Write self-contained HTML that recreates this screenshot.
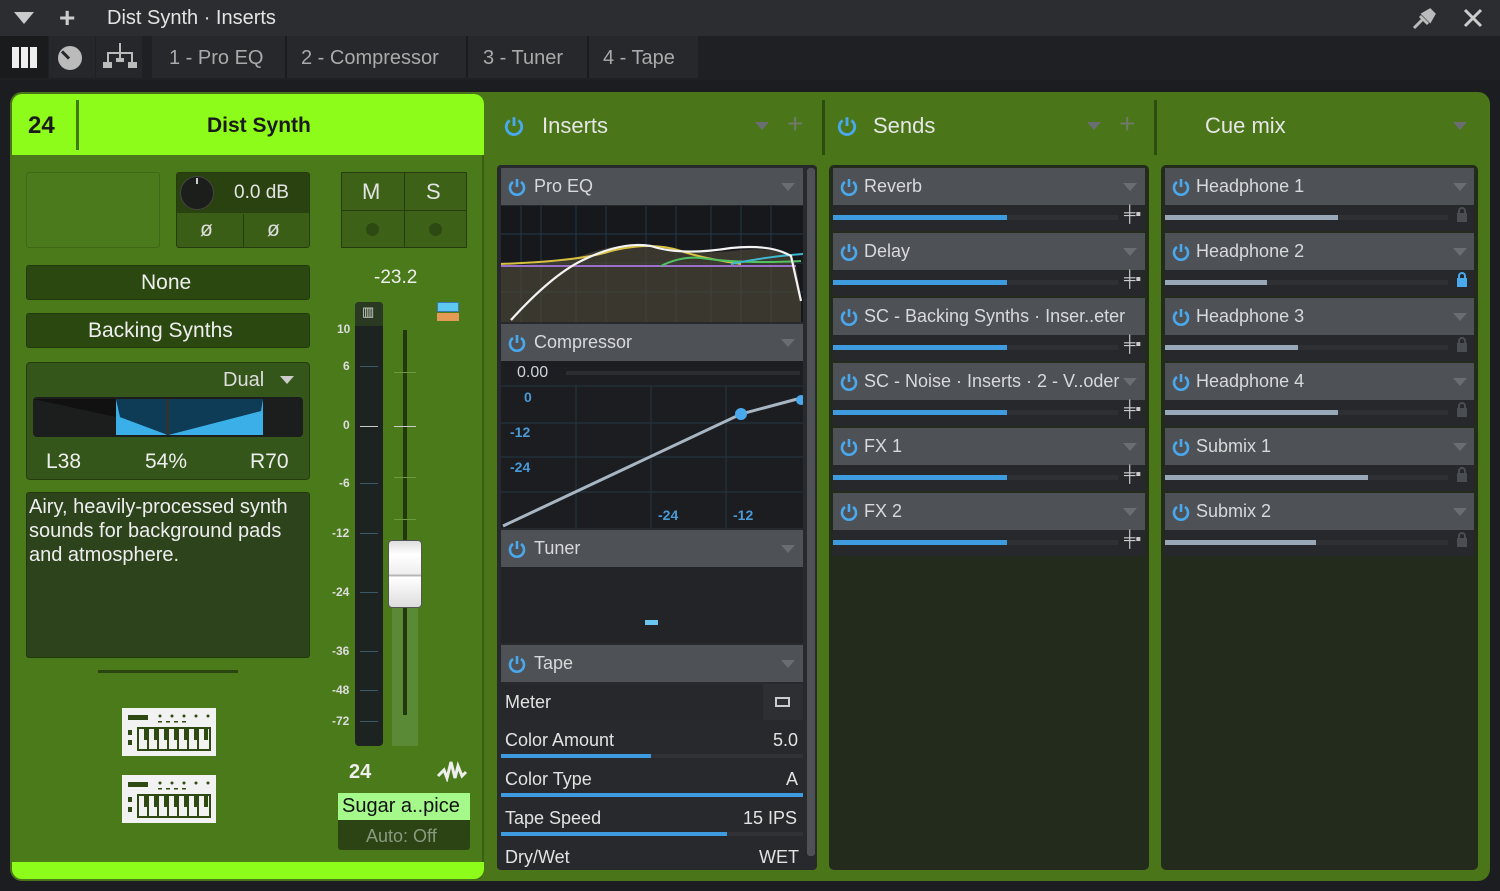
<!DOCTYPE html>
<html><head><meta charset="utf-8"><style>
*{margin:0;padding:0;box-sizing:border-box}
body{width:1500px;height:891px;background:#1c1d20;font-family:"Liberation Sans",sans-serif;position:relative;overflow:hidden;color:#ddd}
.a{position:absolute}
.t{position:absolute;white-space:nowrap}
.hdr{position:absolute;background:#4e5156;height:37px}
.hdr .t{top:8px;font-size:18px;color:#d8d9db}
.tri{position:absolute;width:0;height:0;border-left:7px solid transparent;border-right:7px solid transparent;border-top:8px solid #6a6d72}
.pw{position:absolute;width:20px;height:20px}
.row{position:absolute;background:#26282b}
.blue{background:#3e9be0}
</style></head><body>
<!-- top bar -->
<div class="a" style="left:0;top:0;width:1500px;height:36px;background:#2c2d30"></div>
<div class="a" style="left:14px;top:12px;width:0;height:0;border-left:10px solid transparent;border-right:10px solid transparent;border-top:12px solid #c9cacc"></div>
<div class="t" style="left:59px;top:2px;font-size:28px;color:#ccc;font-weight:bold">+</div>
<div class="t" style="left:107px;top:7px;font-size:20px;color:#e4e4e4">Dist Synth · Inserts</div>
<svg class="a" style="left:1410px;top:6px" width="28" height="26" viewBox="0 0 28 26"><path d="M4 22 L12 14 M10 10 L18 18 M13 8 L20 4 L24 8 L20 15 Z" stroke="#bbb" stroke-width="3" fill="#bbb"/></svg>
<svg class="a" style="left:1463px;top:8px" width="20" height="20"><path d="M2 2L18 18M18 2L2 18" stroke="#ccc" stroke-width="3"/></svg>
<!-- second bar -->
<div class="a" style="left:0;top:36px;width:1500px;height:44px;background:#1f2023"></div>
<div class="a" style="left:0;top:36px;width:48px;height:42px;background:#1a1b1d"></div>
<div class="a" style="left:12px;top:47px;width:26px;height:21px;background:repeating-linear-gradient(90deg,#eee 0 7px,transparent 7px 9px)"></div>
<div class="a" style="left:49px;top:36px;width:46px;height:42px;background:#26272a"></div>
<div class="a" style="left:58px;top:46px;width:24px;height:24px;border-radius:50%;background:#bbb"></div>
<div class="a" style="left:64px;top:50px;width:3px;height:10px;background:#26272a;transform:rotate(-45deg)"></div>
<div class="a" style="left:96px;top:36px;width:46px;height:42px;background:#26272a"></div>
<svg class="a" style="left:102px;top:41px" width="36" height="30"><path d="M18 2V12M6 22V12H30V22M18 12V18" stroke="#bbb" stroke-width="2" fill="none"/><rect x="1" y="21" width="9" height="6" fill="#bbb"/><rect x="26" y="21" width="9" height="6" fill="#bbb"/><rect x="14" y="17" width="8" height="4" fill="#bbb"/></svg>
<div class="a" style="left:152px;top:36px;width:546px;height:42px;background:#27282b"></div>
<div class="a" style="left:285px;top:36px;width:2px;height:42px;background:#1a1b1d"></div>
<div class="a" style="left:466px;top:36px;width:2px;height:42px;background:#1a1b1d"></div>
<div class="a" style="left:587px;top:36px;width:2px;height:42px;background:#1a1b1d"></div>
<div class="t" style="left:169px;top:47px;font-size:20px;color:#aaa">1 - Pro EQ</div>
<div class="t" style="left:301px;top:47px;font-size:20px;color:#aaa">2 - Compressor</div>
<div class="t" style="left:483px;top:47px;font-size:20px;color:#aaa">3 - Tuner</div>
<div class="t" style="left:603px;top:47px;font-size:20px;color:#aaa">4 - Tape</div>

<!-- green outer -->
<div class="a" style="left:10px;top:92px;width:1480px;height:789px;background:#4a7519;border-radius:12px"></div>
<!-- left channel -->
<div class="a" style="left:12px;top:94px;width:472px;height:786px;background:#4b7a1b;border-radius:10px;border-right:2px solid #3a5e14"></div>
<div class="a" style="left:12px;top:94px;width:472px;height:61px;background:#8efc1a;border-radius:10px 10px 0 0"></div>
<div class="a" style="left:76px;top:100px;width:3px;height:50px;background:#3f7a10"></div>
<div class="t" style="left:28px;top:112px;font-size:24px;font-weight:bold;color:#1a1a1a">24</div>
<div class="t" style="left:207px;top:114px;font-size:21px;font-weight:bold;color:#1a1a1a">Dist Synth</div>
<div class="a" style="left:12px;top:862px;width:472px;height:17px;background:#8efc1a;border-radius:0 0 10px 10px"></div>

<div class="a" style="left:26px;top:172px;width:134px;height:76px;border:1px solid #3f6716;border-radius:3px;background:#4a7a1b"></div>
<div class="a" style="left:176px;top:172px;width:134px;height:76px;border:1px solid #253d0e;border-radius:3px;background:#3a5e16"></div>
<div class="a" style="left:177px;top:173px;width:132px;height:40px;background:#2a4210"></div>
<div class="a" style="left:180px;top:176px;width:34px;height:34px;border-radius:50%;background:#1c1e1c;border:1px solid #444"></div>
<div class="a" style="left:196px;top:178px;width:2px;height:6px;background:#ccc"></div>
<div class="t" style="left:234px;top:182px;font-size:19px;color:#e4e4e4">0.0 dB</div>
<div class="a" style="left:243px;top:214px;width:1px;height:33px;background:#253d0e"></div>
<div class="t" style="left:200px;top:218px;font-size:21px;color:#ddd">ø</div>
<div class="t" style="left:267px;top:218px;font-size:21px;color:#ddd">ø</div>

<div class="a" style="left:341px;top:172px;width:126px;height:76px;border:1px solid #253d0e;background:#3c6117"></div>
<div class="a" style="left:404px;top:173px;width:1px;height:74px;background:#253d0e"></div>
<div class="a" style="left:342px;top:210px;width:124px;height:1px;background:#253d0e"></div>
<div class="t" style="left:362px;top:179px;font-size:22px;color:#e4e4e4">M</div>
<div class="t" style="left:426px;top:179px;font-size:22px;color:#e4e4e4">S</div>
<div class="a" style="left:366px;top:223px;width:13px;height:13px;border-radius:50%;background:#2d4a12"></div>
<div class="a" style="left:429px;top:223px;width:13px;height:13px;border-radius:50%;background:#2d4a12"></div>

<div class="a" style="left:26px;top:265px;width:284px;height:35px;background:#2c4811;border:1px solid #203a0c;border-radius:3px"></div>
<div class="t" style="left:141px;top:271px;font-size:21px;color:#eee">None</div>
<div class="a" style="left:26px;top:313px;width:284px;height:35px;background:#2c4811;border:1px solid #203a0c;border-radius:3px"></div>
<div class="t" style="left:88px;top:319px;font-size:21px;color:#eee">Backing Synths</div>
<div class="t" style="left:374px;top:267px;font-size:19px;color:#eee">-23.2</div>

<div class="a" style="left:26px;top:362px;width:284px;height:118px;background:#35561a;border:1px solid #253d0e;border-radius:4px"></div>
<div class="t" style="left:223px;top:369px;font-size:20px;color:#ddd">Dual</div>
<div class="tri" style="left:280px;top:376px;border-top-color:#ccc"></div>
<svg class="a" style="left:33px;top:397px" width="270" height="40"><rect x="0" y="0" width="270" height="40" rx="4" fill="#1c1e1e"/><rect x="83" y="2" width="147" height="36" fill="#0d3a52"/><path d="M83 2V38H230V2L228 14L135 38L87 20Z" fill="#3bb0e8"/><path d="M87 20L135 38L228 14V2H87Z" fill="#0e3b55"/><rect x="133" y="2" width="3" height="36" fill="#333"/><path d="M0 2L83 20V2Z" fill="#111"/></svg>
<div class="t" style="left:46px;top:450px;font-size:21px;color:#eee">L38</div>
<div class="t" style="left:145px;top:450px;font-size:21px;color:#eee">54%</div>
<div class="t" style="left:250px;top:450px;font-size:21px;color:#eee">R70</div>

<div class="a" style="left:26px;top:492px;width:284px;height:166px;background:#2c431c;border:1px solid #203a0c;border-radius:3px"></div>
<div class="a" style="left:29px;top:495px;font-size:20px;line-height:24px;color:#eee;width:282px">Airy, heavily-processed synth sounds for background pads and atmosphere.</div>
<div class="a" style="left:98px;top:670px;width:140px;height:3px;background:#2a4510"></div>

<svg class="a" style="left:122px;top:708px" width="94" height="48"><rect width="94" height="48" fill="#f2f2f2"/><rect x="6" y="7" width="20" height="5" fill="#2e4a12"/><g fill="#2e4a12"><circle cx="38" cy="8" r="1.5"/><circle cx="50" cy="8" r="1.5"/><circle cx="62" cy="8" r="1.5"/><circle cx="74" cy="8" r="1.5"/><circle cx="86" cy="8" r="1.5"/><rect x="36" y="13" width="4" height="1.5"/><rect x="44" y="13" width="4" height="1.5"/><rect x="52" y="13" width="4" height="1.5"/><rect x="60" y="13" width="4" height="1.5"/><rect x="6" y="22" width="4" height="5"/><rect x="6" y="32" width="4" height="5"/></g><rect x="16" y="20" width="72" height="22" fill="none" stroke="#2e4a12" stroke-width="2"/><path d="M26 20V42M36 20V42M46 20V42M56 20V42M66 20V42M76 20V42" stroke="#2e4a12" stroke-width="2"/><g fill="#2e4a12"><rect x="22" y="20" width="4" height="12"/><rect x="32" y="20" width="4" height="12"/><rect x="42" y="20" width="4" height="12"/><rect x="52" y="20" width="4" height="12"/><rect x="62" y="20" width="4" height="12"/><rect x="72" y="20" width="4" height="12"/><rect x="82" y="20" width="4" height="12"/></g></svg>
<svg class="a" style="left:122px;top:775px" width="94" height="48"><rect width="94" height="48" fill="#f2f2f2"/><rect x="6" y="7" width="20" height="5" fill="#2e4a12"/><g fill="#2e4a12"><circle cx="38" cy="8" r="1.5"/><circle cx="50" cy="8" r="1.5"/><circle cx="62" cy="8" r="1.5"/><circle cx="74" cy="8" r="1.5"/><circle cx="86" cy="8" r="1.5"/><rect x="36" y="13" width="4" height="1.5"/><rect x="44" y="13" width="4" height="1.5"/><rect x="52" y="13" width="4" height="1.5"/><rect x="60" y="13" width="4" height="1.5"/><rect x="6" y="22" width="4" height="5"/><rect x="6" y="32" width="4" height="5"/></g><rect x="16" y="20" width="72" height="22" fill="none" stroke="#2e4a12" stroke-width="2"/><path d="M26 20V42M36 20V42M46 20V42M56 20V42M66 20V42M76 20V42" stroke="#2e4a12" stroke-width="2"/><g fill="#2e4a12"><rect x="22" y="20" width="4" height="12"/><rect x="32" y="20" width="4" height="12"/><rect x="42" y="20" width="4" height="12"/><rect x="52" y="20" width="4" height="12"/><rect x="62" y="20" width="4" height="12"/><rect x="72" y="20" width="4" height="12"/><rect x="82" y="20" width="4" height="12"/></g></svg>

<!-- fader -->
<div class="a" style="left:355px;top:302px;width:28px;height:444px;background:#1d2320;border-radius:4px"></div>
<div class="a" style="left:355px;top:302px;width:28px;height:24px;background:#2a3a22;border-radius:4px 4px 0 0"></div>
<div class="t" style="left:362px;top:304px;font-size:13px;color:#ddd">▥</div>
<div class="a" style="left:392px;top:540px;width:26px;height:206px;background:#5a8a36"></div>
<div class="a" style="left:403px;top:330px;width:4px;height:385px;background:#22380c"></div>
<div class="a" style="left:437px;top:302px;width:22px;height:10px;background:#5ec8f0;border:1px solid #3a7ab0"></div>
<div class="a" style="left:437px;top:313px;width:22px;height:8px;background:#e49a55"></div>
<div class="t" style="left:337px;top:322px;font-size:12px;font-weight:bold;color:#ddd">10</div>
<div class="t" style="left:343px;top:359px;font-size:12px;font-weight:bold;color:#ddd">6</div>
<div class="t" style="left:343px;top:418px;font-size:12px;font-weight:bold;color:#ddd">0</div>
<div class="t" style="left:339px;top:476px;font-size:12px;font-weight:bold;color:#ddd">-6</div>
<div class="t" style="left:332px;top:526px;font-size:12px;font-weight:bold;color:#ddd">-12</div>
<div class="t" style="left:332px;top:585px;font-size:12px;font-weight:bold;color:#ddd">-24</div>
<div class="t" style="left:332px;top:644px;font-size:12px;font-weight:bold;color:#ddd">-36</div>
<div class="t" style="left:332px;top:683px;font-size:12px;font-weight:bold;color:#ddd">-48</div>
<div class="t" style="left:332px;top:714px;font-size:12px;font-weight:bold;color:#ddd">-72</div>
<div class="a" style="left:360px;top:366px;width:18px;height:1px;background:#3a5a6a;box-shadow:0 60px 0 #ccc,0 117px 0 #3a5a6a,0 167px 0 #3a5a6a,0 226px 0 #3a5a6a,0 285px 0 #3a5a6a,0 324px 0 #3a5a6a,0 355px 0 #3a5a6a"></div>
<div class="a" style="left:394px;top:372px;width:22px;height:1px;background:#6b9a40;box-shadow:0 54px 0 #ccc,0 105px 0 #6b9a40,0 147px 0 #6b9a40"></div>
<div class="a" style="left:388px;top:540px;width:34px;height:68px;background:linear-gradient(#ddd,#fff 20%,#eee 50%,#aaa 52%,#fff 55%,#ddd);border:1px solid #555;border-radius:4px"></div>
<div class="t" style="left:349px;top:761px;font-size:20px;font-weight:bold;color:#eee">24</div>
<svg class="a" style="left:436px;top:758px" width="32" height="24"><path d="M2 18L8 12L11 20L15 4L19 20L22 8L26 18L30 14" stroke="#eee" stroke-width="3" fill="none"/></svg>
<div class="a" style="left:338px;top:793px;width:132px;height:27px;background:#a4f98a"></div>
<div class="t" style="left:342px;top:795px;font-size:20px;color:#111">Sugar a..pice</div>
<div class="a" style="left:338px;top:820px;width:132px;height:30px;background:#2c4314;border-radius:0 0 3px 3px"></div>
<div class="t" style="left:366px;top:826px;font-size:18px;color:#8a9a80">Auto: Off</div>

<!-- column headers -->
<div class="a" style="left:822px;top:100px;width:3px;height:55px;background:#2f4c10"></div>
<div class="a" style="left:1154px;top:100px;width:3px;height:55px;background:#2f4c10"></div>
<svg class="pw" style="left:503px;top:115px;width:22px;height:22px" viewBox="0 0 20 20"><path d="M6 5A7 7 0 1 0 14 5" stroke="#4aa8ec" stroke-width="2.6" fill="none"/><path d="M10 2V10" stroke="#4aa8ec" stroke-width="2.6"/></svg>
<div class="t" style="left:542px;top:113px;font-size:22px;color:#e6e6e6">Inserts</div>
<div class="tri" style="left:755px;top:122px"></div>
<div class="t" style="left:787px;top:108px;font-size:28px;color:#6f7a68">+</div>
<svg class="pw" style="left:836px;top:115px;width:22px;height:22px" viewBox="0 0 20 20"><path d="M6 5A7 7 0 1 0 14 5" stroke="#4aa8ec" stroke-width="2.6" fill="none"/><path d="M10 2V10" stroke="#4aa8ec" stroke-width="2.6"/></svg>
<div class="t" style="left:873px;top:113px;font-size:22px;color:#e6e6e6">Sends</div>
<div class="tri" style="left:1087px;top:122px"></div>
<div class="t" style="left:1119px;top:108px;font-size:28px;color:#6f7a68">+</div>
<div class="t" style="left:1205px;top:113px;font-size:22px;color:#e6e6e6">Cue mix</div>
<div class="tri" style="left:1453px;top:122px"></div>

<!-- inserts box -->
<div class="a" style="left:497px;top:165px;width:320px;height:705px;background:#28292c;border-radius:4px"></div>
<div class="a" style="left:807px;top:168px;width:8px;height:688px;background:#4e5156;border-radius:3px"></div>

<div class="hdr ih" style="left:501px;top:168px;width:302px"><div class="t" style="left:33px">Pro EQ</div></div>
<svg class="a" style="left:501px;top:206px" width="302" height="116"><rect width="302" height="116" fill="#16181b"/><g stroke="#23394a" stroke-width="1"><path d="M0 28H302M0 57H302M0 86H302"/><path d="M20 0V116M40 0V116M75 0V116M105 0V116M145 0V116M175 0V116M210 0V116M240 0V116M270 0V116"/></g><path d="M0 106L0 60Q50 58 80 50Q120 35 150 40Q180 50 230 45Q270 40 290 50L295 60L300 90L300 116L0 116Z" fill="#4a4636" opacity=".7"/><path d="M0 60H295" stroke="#9a70c8" stroke-width="2"/><path d="M0 58Q80 55 110 45Q150 35 180 45Q200 52 240 58" stroke="#d8c040" stroke-width="2" fill="none"/><path d="M160 60Q180 50 200 52Q240 58 300 55" stroke="#50c060" stroke-width="2" fill="none"/><path d="M230 58Q270 50 302 48" stroke="#40b8d0" stroke-width="2" fill="none"/><path d="M10 114Q50 70 80 55Q120 35 150 40Q180 50 230 42Q270 38 290 50L300 95" stroke="#f4f4f4" stroke-width="2.2" fill="none"/></svg>

<div class="hdr ih" style="left:501px;top:324px;width:302px"><div class="t" style="left:33px">Compressor</div></div>
<div class="a" style="left:501px;top:361px;width:302px;height:24px;background:#1c1e21"></div>
<div class="t" style="left:517px;top:364px;font-size:16px;color:#cfd4da">0.00</div>
<div class="a" style="left:566px;top:371px;width:234px;height:4px;background:#2b2e31"></div>
<svg class="a" style="left:501px;top:385px" width="302" height="143"><rect width="302" height="143" fill="#1b1d20"/><g stroke="#243646"><path d="M0 1H302M0 38H302M0 72H302M0 107H302M75 0V143M150 0V143M225 0V143"/></g><path d="M2 141L240 29L300 13" stroke="#a8b6c4" stroke-width="3" fill="none"/><circle cx="240" cy="29" r="6" fill="#4aa8ec"/><circle cx="300" cy="15" r="5" fill="#4aa8ec"/><g font-family="Liberation Sans" font-size="14" font-weight="bold" fill="#4a9ad8"><text x="23" y="17">0</text><text x="9" y="52">-12</text><text x="9" y="87">-24</text><text x="157" y="135">-24</text><text x="232" y="135">-12</text></g></svg>

<div class="hdr ih" style="left:501px;top:530px;width:302px"><div class="t" style="left:33px">Tuner</div></div>
<div class="a" style="left:501px;top:567px;width:302px;height:76px;background:#222427"></div>
<div class="a" style="left:645px;top:620px;width:13px;height:5px;background:#6cc4f0"></div>

<div class="hdr ih" style="left:501px;top:645px;width:302px"><div class="t" style="left:33px">Tape</div></div>
<div class="row" style="left:501px;top:684px;width:302px;height:36px"></div>
<div class="a" style="left:763px;top:684px;width:40px;height:36px;background:#2d2f33"></div>
<div class="a" style="left:775px;top:697px;width:15px;height:10px;border:2px solid #ccc"></div>
<div class="t" style="left:505px;top:692px;font-size:18px;color:#e2e2e2">Meter</div>
<div class="t" style="left:505px;top:730px;font-size:18px;color:#e2e2e2">Color Amount</div>
<div class="t" style="left:773px;top:730px;font-size:18px;color:#e2e2e2">5.0</div>
<div class="a" style="left:501px;top:754px;width:302px;height:4px;background:#303236"></div>
<div class="a blue" style="left:501px;top:754px;width:150px;height:4px"></div>
<div class="t" style="left:505px;top:769px;font-size:18px;color:#e2e2e2">Color Type</div>
<div class="t" style="left:786px;top:769px;font-size:18px;color:#e2e2e2">A</div>
<div class="a blue" style="left:501px;top:793px;width:302px;height:4px"></div>
<div class="t" style="left:505px;top:808px;font-size:18px;color:#e2e2e2">Tape Speed</div>
<div class="t" style="left:743px;top:808px;font-size:18px;color:#e2e2e2">15 IPS</div>
<div class="a" style="left:501px;top:832px;width:302px;height:4px;background:#303236"></div>
<div class="a blue" style="left:501px;top:832px;width:226px;height:4px"></div>
<div class="t" style="left:505px;top:847px;font-size:18px;color:#e2e2e2">Dry/Wet</div>
<div class="t" style="left:759px;top:847px;font-size:18px;color:#e2e2e2">WET</div>

<!-- sends box -->
<div class="a" style="left:829px;top:165px;width:320px;height:705px;background:#232b1d;border-radius:5px"></div>
<div class="a" style="left:1161px;top:165px;width:317px;height:705px;background:#232b1d;border-radius:5px"></div>

<div id="sends"></div>
<script>
var s=["Reverb","Delay","SC - Backing Synths · Inser..eter","SC - Noise · Inserts · 2 - V..oder","FX 1","FX 2"];
var c=["Headphone 1","Headphone 2","Headphone 3","Headphone 4","Submix 1","Submix 2"];
var cw=[173,102,133,173,203,151];
var pw='<svg viewBox="0 0 20 20" style="position:absolute;left:6px;top:9px;width:20px;height:20px"><path d="M6 5A7 7 0 1 0 14 5" stroke="#4aa8ec" stroke-width="2.6" fill="none"/><path d="M10 2V10" stroke="#4aa8ec" stroke-width="2.6"/></svg>';
var ih=document.querySelectorAll('.ih');
for(var k=0;k<ih.length;k++){ih[k].insertAdjacentHTML('afterbegin',pw);ih[k].insertAdjacentHTML('beforeend','<div class="tri" style="left:280px;top:15px"></div>');}
var h="";
for(var i=0;i<6;i++){var y=168+65*i;
h+='<div class="hdr" style="left:833px;top:'+y+'px;width:312px">'+pw+(i==2?'':'<div class="tri" style="left:290px;top:15px"></div>')+'<div class="t" style="left:31px">'+s[i]+'</div></div>';
h+='<div class="row" style="left:833px;top:'+(y+37)+'px;width:312px;height:26px"></div><div class="a" style="left:833px;top:'+(y+47)+'px;width:285px;height:5px;background:#2e3033"></div><div class="a blue" style="left:833px;top:'+(y+47)+'px;width:174px;height:5px"></div>';
h+='<div class="t" style="left:1124px;top:'+(y+38)+'px;font-size:16px;color:#ccc;font-weight:bold">╪▪</div>';
h+='<div class="hdr" style="left:1165px;top:'+y+'px;width:309px">'+pw+'<div class="t" style="left:31px">'+c[i]+'</div><div class="tri" style="left:288px;top:15px"></div></div>';
h+='<div class="row" style="left:1165px;top:'+(y+37)+'px;width:309px;height:26px"></div><div class="a" style="left:1165px;top:'+(y+47)+'px;width:283px;height:5px;background:#2e3033"></div><div class="a" style="left:1165px;top:'+(y+47)+'px;width:'+cw[i]+'px;height:5px;background:#98a8b8"></div>';
var lc=i==1?'#4aa8ec':'#4a4d52';
h+='<div class="a" style="left:1457px;top:'+(y+45)+'px;width:10px;height:9px;background:'+lc+'"></div><div class="a" style="left:1458px;top:'+(y+39)+'px;width:8px;height:8px;border:2px solid '+lc+';border-bottom:none;border-radius:4px 4px 0 0"></div>';
}
document.getElementById('sends').innerHTML=h;
</script>
</body></html>
